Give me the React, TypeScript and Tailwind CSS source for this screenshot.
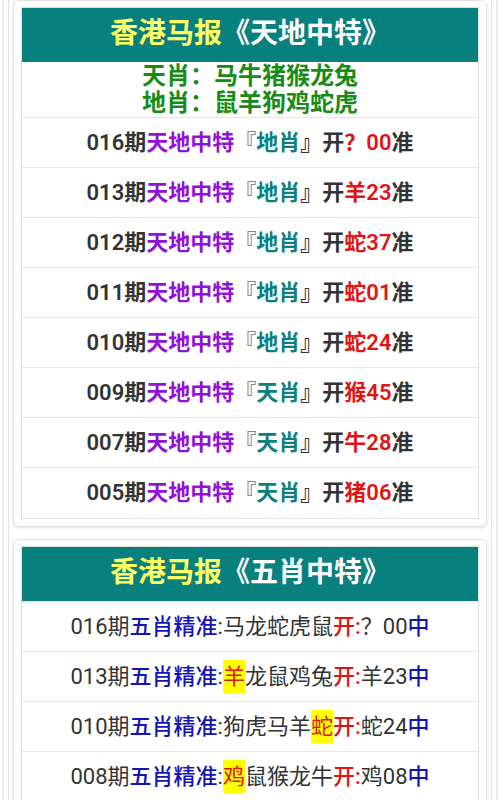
import React from 'react';

const FONT = { fontFamily: 'Roboto, "Noto Sans CJK SC", "Noto Sans", sans-serif' };

type TdRow = { qi: string; kind: string; pick: string; num: string };

const tdRows: TdRow[] = [
  { qi: '016', kind: '地肖', pick: '？', num: '00' },
  { qi: '013', kind: '地肖', pick: '羊', num: '23' },
  { qi: '012', kind: '地肖', pick: '蛇', num: '37' },
  { qi: '011', kind: '地肖', pick: '蛇', num: '01' },
  { qi: '010', kind: '地肖', pick: '蛇', num: '24' },
  { qi: '009', kind: '天肖', pick: '猴', num: '45' },
  { qi: '007', kind: '天肖', pick: '牛', num: '28' },
  { qi: '005', kind: '天肖', pick: '猪', num: '06' },
];

type WxRow = { qi: string; list: string; hit: number; res: string };

const wxRows: WxRow[] = [
  { qi: '016', list: '马龙蛇虎鼠', hit: -1, res: '？00' },
  { qi: '013', list: '羊龙鼠鸡兔', hit: 0, res: '羊23' },
  { qi: '010', list: '狗虎马羊蛇', hit: 4, res: '蛇24' },
  { qi: '008', list: '鸡鼠猴龙牛', hit: 0, res: '鸡08' },
];

const Header: React.FC<{ title: string }> = ({ title }) => (
  <div className="h-[54px] pb-[2px] bg-[#08807d] flex items-center justify-center text-[28px] font-bold leading-none">
    <span className="text-[#ffff66]">香港马报</span>
    <span className="text-white">《{title}》</span>
  </div>
);

const Card: React.FC<{ children: React.ReactNode; className?: string }> = ({ children, className }) => (
  <div className={`rounded-md border border-[#e3e3e3] bg-white px-[7px] pt-[6px] pb-[7px] shadow-[0_1px_3px_rgba(0,0,0,0.12)] ${className ?? ''}`}>
    <div className="border border-[#dedede]">{children}</div>
  </div>
);

export default function App() {
  return (
    <div className="min-h-screen bg-white px-[2px]" style={FONT}>
      <div className="min-h-screen border-x-2 border-[#ececec] px-[4px]">
        <div className="min-h-screen border-x border-[#e4e4e4] px-[4px]">
          <Card>
            <Header title="天地中特" />
            <div className="h-[56px] flex flex-col items-center justify-center text-[24px] leading-[27px] font-bold text-[#168c16] border-b border-[#e6e6e6]">
              <div>天肖：马牛猪猴龙兔</div>
              <div>地肖：鼠羊狗鸡蛇虎</div>
            </div>
            {tdRows.map((r, i) => (
              <div
                key={r.qi}
                className={`h-[50px] pb-[1px] flex items-center justify-center text-[22px] font-semibold text-[#333] ${i < tdRows.length - 1 ? 'border-b border-[#e6e6e6]' : ''}`}
              >
                <span>{r.qi}期</span>
                <span className="text-[#9111d6]">天地中特</span>
                <span className="text-[#888]">『</span>
                <span className="text-[#0c7f7f]">{r.kind}</span>
                <span>』开</span>
                <span className="text-[#e01414]">{r.pick}{r.num}</span>
                <span>准</span>
              </div>
            ))}
          </Card>
          <Card className="mt-[12px]">
            <Header title="五肖中特" />
            {wxRows.map((r) => (
              <div
                key={r.qi}
                className="h-[50px] pb-[1px] flex items-center justify-center text-[22px] font-normal text-[#333] border-t border-[#e6e6e6]"
              >
                <span>{r.qi}期</span>
                <span className="text-[#1414b4] font-medium">五肖精准</span>
                <span>:</span>
                {r.list.split('').map((c, j) =>
                  j === r.hit ? (
                    <span key={j} className="bg-[#ffff00] text-[#e01414]">{c}</span>
                  ) : (
                    <span key={j}>{c}</span>
                  )
                )}
                <span className="text-[#e01414] font-medium">开:</span>
                <span>{r.res}</span>
                <span className="text-[#1414b4] font-medium">中</span>
              </div>
            ))}
          </Card>
        </div>
      </div>
    </div>
  );
}
